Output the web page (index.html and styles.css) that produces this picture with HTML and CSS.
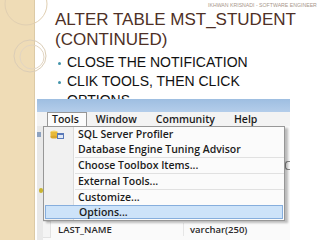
FILE: index.html
```html
<!DOCTYPE html>
<html lang="en">
<head>
    <meta charset="UTF-8">
    <meta name="viewport" content="width=device-width, initial-scale=1.0">
    <title>Alter Table MST_STUDENT (Continued)</title>
    <link rel="stylesheet" href="styles.css">
</head>
<body>
    <div class="slide">
        <div class="strip"></div>
        <!-- faint rings in the corner of the theme -->
        <svg class="rings" width="60" height="80" viewBox="0 0 60 80">
            <circle cx="26" cy="4" r="21" fill="none" stroke="#e0cfb2" stroke-width="1"/>
            <circle cx="30" cy="56" r="16" fill="none" stroke="#dbcdb6" stroke-width="1"/>
            <circle cx="32" cy="57" r="12" fill="none" stroke="#e2d5c2" stroke-width="1"/>
        </svg>
        <div class="content">
            <div class="byline">IKHWAN KRISNADI - SOFTWARE ENGINEER</div>
            <h1 class="title">ALTER TABLE MST_STUDENT<br>(CONTINUED)</h1>
            <ul class="points">
                <li>CLOSE THE NOTIFICATION</li>
                <li>CLIK TOOLS, THEN CLICK OPTIONS</li>
            </ul>
            <div class="shot">
                <div class="titlebar"></div>
                <div class="menubar">
                    <span class="menu open">Tools</span>
                    <span class="menu">Window</span>
                    <span class="menu">Community</span>
                    <span class="menu">Help</span>
                </div>
                <div class="workspace">
                    <div class="gutter">
                        <span class="gicon blue"></span>
                        <span class="gicon key"></span>
                    </div>
                    <div class="grid">
                        <div class="row peek-row">
                            <span class="bar short"></span>
                            <span class="bar long"></span>
                        </div>
                        <div class="row">
                            <span class="rowhead"></span>
                            <span class="cell name">LAST_NAME</span>
                            <span class="cell type">varchar(250)</span>
                        </div>
                    </div>
                    <span class="edge-icon"></span>
                </div>

                <div class="dropdown">
                    <div class="item">
                        <svg class="item-icon" width="14" height="9" viewBox="0 0 14 9">
                            <ellipse cx="4" cy="2" rx="3.5" ry="1.5" fill="#f3d36a"/>
                            <rect x="0.5" y="2" width="7" height="5" fill="#e7b93a"/>
                            <ellipse cx="4" cy="7" rx="3.5" ry="1.5" fill="#d9a52a"/>
                            <rect x="7" y="3" width="7" height="6" fill="#5a79b8"/>
                            <rect x="8" y="5" width="5" height="3" fill="#dfe8f6"/>
                        </svg>
                        <span class="label">SQL Server Profiler</span>
                    </div>
                    <div class="item">
                        <span class="label">Database Engine Tuning Advisor</span>
                    </div>
                    <div class="sep"></div>
                    <div class="item">
                        <span class="label">Choose Toolbox Items...</span>
                    </div>
                    <div class="sep"></div>
                    <div class="item">
                        <span class="label">External Tools...</span>
                    </div>
                    <div class="sep"></div>
                    <div class="item">
                        <span class="label">Customize...</span>
                    </div>
                    <div class="item active">
                        <span class="label">Options...</span>
                    </div>
                </div>
            </div>
        </div>
    </div>
</body>
</html>
```

FILE: styles.css
```css
html, body {
    margin: 0;
    padding: 0;
}
body {
    width: 320px;
    height: 240px;
    overflow: hidden;
    background-color: #fff;
    font-family: "Liberation Sans", Arial, sans-serif;
}
.slide {
    display: flex;
    height: 240px;
    position: relative;
}
.strip {
    width: 34px;
    flex-shrink: 0;
    background-color: #efdcb6;
    border-right: 1px solid #dccaa6;
}
.rings {
    position: absolute;
    left: 0;
    top: 0;
}
.content {
    flex: 1;
    min-width: 0;
    position: relative;
}
.byline {
    margin-top: 2px;
    padding-left: 173px;
    height: 6px;
    line-height: 6px;
    font-size: 5.2px;
    color: #a8968a;
    white-space: nowrap;
}
.title {
    margin: 2px 0 0 20px;
    font-size: 17px;
    line-height: 20px;
    font-weight: normal;
    color: #4e3026;
    white-space: nowrap;
}
.points {
    list-style: none;
    margin: 3px 0 0 0;
    padding: 0 0 0 32px;
    height: 46px;
    overflow: hidden;
    font-size: 14px;
    line-height: 19px;
    color: #111;
    width: 200px;
}
.points li {
    position: relative;
}
.points li::before {
    content: "";
    position: absolute;
    left: -9px;
    top: 9px;
    width: 3px;
    height: 3px;
    border-radius: 50%;
    background-color: #4394ab;
}

/* screenshot of the tools menu */
.shot {
    margin-left: 2px;
    width: 253px;
    height: 141px;
    position: relative;
    background-color: #fafafa;
    font-family: "Open Sans", "Noto Sans", sans-serif;
    color: #1c1c1c;
}
.titlebar {
    height: 13px;
    background: linear-gradient(#9ebee1, #b4cdea);
}
.menubar {
    height: 14px;
    display: flex;
    align-items: flex-end;
    background-color: #f3f3f3;
    font-size: 10.5px;
    font-weight: 600;
}
.menu {
    height: 13px;
    line-height: 12px;
    margin-right: 19px;
}
.menu.open {
    margin-left: 10px;
    margin-right: 9px;
    padding: 0 7px 0 4px;
    border: 1px solid #979797;
    border-bottom: none;
    background-color: #fcfcfc;
    position: relative;
    z-index: 2;
}
.workspace {
    display: flex;
    height: 114px;
    position: relative;
}
.gutter {
    width: 6px;
    background-color: #e9e9e9;
    position: relative;
}
.gicon {
    position: absolute;
    width: 4px;
    height: 5px;
    left: 0;
}
.gicon.blue {
    top: 6px;
    background-color: #8ea3c0;
}
.gicon.key {
    top: 62px;
    left: 2px;
    background-color: #c9b530;
    border-radius: 2px;
}
.grid {
    flex: 1;
    padding-top: 91px;
}
.row {
    display: flex;
    height: 17px;
    align-items: center;
    font-size: 9.5px;
    font-weight: 600;
    color: #2a2a2a;
}
.peek-row {
    height: 4px;
    align-items: flex-end;
}
.bar {
    height: 2px;
    background-color: #b8b8b8;
}
.bar.short {
    width: 50px;
    margin-left: 14px;
}
.bar.long {
    width: 40px;
    margin-left: 84px;
}
.rowhead {
    width: 12px;
    height: 15px;
    margin-left: -6px;
    border: 1px solid #e2e2e2;
    background-color: #f4f4f4;
    flex-shrink: 0;
}
.cell.name {
    width: 125px;
    padding-left: 7px;
    border-right: 1px solid #e6e6e6;
}
.cell.type {
    padding-left: 6px;
}
.edge-icon {
    position: absolute;
    right: 0;
    top: 35px;
    width: 4px;
    height: 7px;
    border: 1px solid #888;
    border-right: none;
    border-radius: 3px 0 0 3px;
}
.dropdown {
    position: absolute;
    left: 6px;
    top: 27px;
    width: 240px;
    background-color: #fbfbfb;
    border: 1px solid #979797;
    box-shadow: 3px 2px 2px rgba(0, 0, 0, 0.25);
    font-size: 10.5px;
    font-weight: 600;
    z-index: 1;
    background-image: linear-gradient(90deg, #f1f1f1 29px, #dcdcdc 29px, #dcdcdc 30px, #fbfbfb 30px);
}
.item {
    height: 15px;
    line-height: 15px;
    position: relative;
    padding-left: 34px;
    white-space: nowrap;
}
.item-icon {
    position: absolute;
    left: 6px;
    top: 3px;
}
.sep {
    height: 1px;
    margin-left: 31px;
    background-color: #e1e1e1;
}
.item.active {
    height: 12px;
    line-height: 12px;
    margin: 0 1px 1px 1px;
    padding-left: 33px;
    background-color: #cde3f9;
    border: 1px solid #86aedd;
}
```
